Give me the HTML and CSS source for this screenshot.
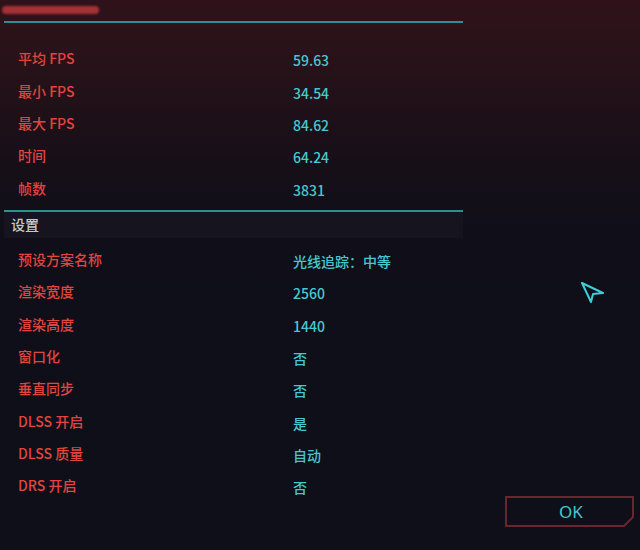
FILE: index.html
```html
<!DOCTYPE html>
<html lang="zh">
<head>
<meta charset="utf-8">
<link rel="stylesheet" href="styles.css">
</head>
<body>
<div class="page">
  <div class="panel">
    <div class="top"><div class="pill"></div></div>
    <div class="rule"></div>
    <div class="stats">
      <div class="row"><span class="lbl">平均 FPS</span><span class="val">59.63</span></div>
      <div class="row"><span class="lbl">最小 FPS</span><span class="val">34.54</span></div>
      <div class="row"><span class="lbl">最大 FPS</span><span class="val">84.62</span></div>
      <div class="row"><span class="lbl">时间</span><span class="val">64.24</span></div>
      <div class="row"><span class="lbl">帧数</span><span class="val">3831</span></div>
    </div>
    <div class="rule"></div>
    <div class="section">设置</div>
    <div class="settings">
      <div class="row"><span class="lbl">预设方案名称</span><span class="val">光线追踪：中等</span></div>
      <div class="row"><span class="lbl">渲染宽度</span><span class="val">2560</span></div>
      <div class="row"><span class="lbl">渲染高度</span><span class="val">1440</span></div>
      <div class="row"><span class="lbl">窗口化</span><span class="val">否</span></div>
      <div class="row"><span class="lbl">垂直同步</span><span class="val">否</span></div>
      <div class="row"><span class="lbl">DLSS 开启</span><span class="val">是</span></div>
      <div class="row"><span class="lbl">DLSS 质量</span><span class="val">自动</span></div>
      <div class="row"><span class="lbl">DRS 开启</span><span class="val">否</span></div>
    </div>
  </div>
  <div class="side">
    <button class="ok">
      <svg class="ok-frame" width="130" height="31" viewBox="0 0 130 31"><polygon points="1,1 128,1 128,21 119,30 1,30" fill="none" stroke="#6b2430" stroke-width="2"/></svg>
      <span class="ok-text">OK</span>
    </button>
  </div>
  <svg class="cursor" width="26" height="24" viewBox="0 0 26 24"><polygon points="2,2 23,12 13,13 11,21" fill="none" stroke="#3ccfd6" stroke-width="2" stroke-linejoin="round"/></svg>
</div>
</body>
</html>
```
FILE: styles.css
```css
* { box-sizing: border-box; }
html, body { margin: 0; padding: 0; }
body {
  width: 640px;
  height: 550px;
  overflow: hidden;
  font-family: "Noto Sans CJK SC", "Noto Sans", sans-serif;
  font-weight: 500;
  font-size: 14px;
  background: linear-gradient(to bottom, #2f1219 0px, #281219 60px, #170f18 160px, #100f19 230px, #0e0f19 550px);
}
.page {
  position: relative;
  display: flex;
  width: 640px;
  height: 550px;
}
.panel {
  width: 459px;
  margin-left: 4px;
}
.top {
  height: 21px;
  padding-top: 6px;
}
.pill {
  width: 97px;
  height: 8px;
  margin-left: -2px;
  border-radius: 4px;
  background: #b8383a;
  filter: blur(1px);
  opacity: 0.85;
}
.rule {
  height: 2px;
  background: #2f8d94;
}
.stats { padding-top: 19px; padding-bottom: 6px; }
.row {
  display: flex;
  height: 32.35px;
  align-items: center;
  line-height: 20px;
}
.lbl {
  width: 289px;
  padding-left: 14px;
  color: #e2443f;
}
.val {
  color: #47c8d0;
  padding-top: 4px;
}
.section {
  height: 26px;
  line-height: 24px;
  padding-left: 7px;
  background: #15141f;
  color: #c9c9cc;
}
.settings { padding-top: 5px; }
.side {
  flex: 1;
  padding-left: 42px;
  padding-top: 496px;
}
.ok {
  position: relative;
  width: 130px;
  height: 31px;
  padding: 0;
  border: none;
  background: transparent;
  display: flex;
  align-items: center;
  justify-content: center;
  font-family: "Noto Sans", sans-serif;
  font-size: 17px;
  color: #47c8d0;
}
.ok-frame { position: absolute; left: 0; top: 0; }
.ok-text { position: relative; line-height: 20px; padding-left: 2px; }
.cursor {
  position: absolute;
  left: 580px;
  top: 281px;
}
```
